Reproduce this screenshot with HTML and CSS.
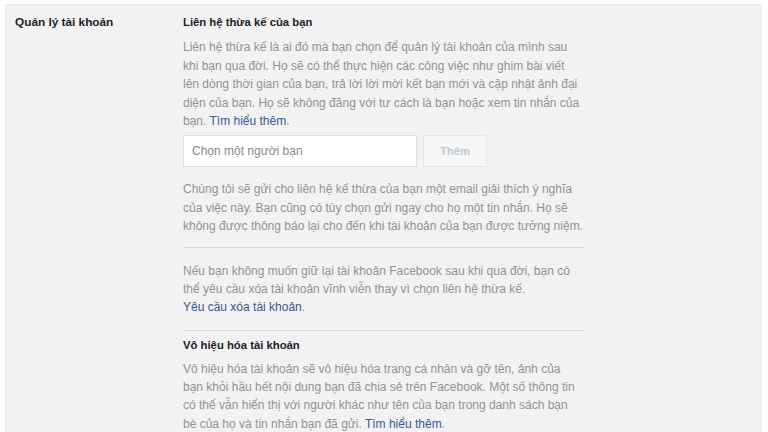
FILE: index.html
```html
<!DOCTYPE html>
<html lang="vi">
<head>
<meta charset="utf-8">
<title>Quản lý tài khoản</title>
<link rel="stylesheet" href="styles.css">
</head>
<body>
<div class="panel">
  <div class="label">Quản lý tài khoản</div>
  <div class="content">
    <h3 class="heading">Liên hệ thừa kế của bạn</h3>
    <p class="text">Liên hệ thừa kế là ai đó mà bạn chọn để quản lý tài khoản của mình sau khi bạn qua đời. Họ sẽ có thể thực hiện các công việc như ghim bài viết lên dòng thời gian của bạn, trả lời lời mời kết bạn mới và cập nhật ảnh đại diện của bạn. Họ sẽ không đăng với tư cách là bạn hoặc xem tin nhắn của bạn. <a class="link" href="#">Tìm hiểu thêm</a>.</p>
    <div class="picker">
      <input class="friend-input" type="text" placeholder="Chọn một người bạn">
      <button class="add-btn" type="button">Thêm</button>
    </div>
    <p class="text note">Chúng tôi sẽ gửi cho liên hệ kế thừa của bạn một email giải thích ý nghĩa của việc này. Bạn cũng có tùy chọn gửi ngay cho họ một tin nhắn. Họ sẽ không được thông báo lại cho đến khi tài khoản của bạn được tưởng niệm.</p>
    <hr class="divider">
    <p class="text delete">Nếu bạn không muốn giữ lại tài khoản Facebook sau khi qua đời, bạn có thể yêu cầu xóa tài khoản vĩnh viễn thay vì chọn liên hệ thừa kế.<br><a class="link" href="#">Yêu cầu xóa tài khoản</a>.</p>
    <hr class="divider second">
    <h3 class="heading second-heading">Vô hiệu hóa tài khoản</h3>
    <p class="text last">Vô hiệu hóa tài khoản sẽ vô hiệu hóa trang cá nhân và gỡ tên, ảnh của bạn khỏi hầu hết nội dung bạn đã chia sẻ trên Facebook. Một số thông tin có thể vẫn hiển thị với người khác như tên của bạn trong danh sách bạn bè của họ và tin nhắn bạn đã gửi. <a class="link" href="#">Tìm hiểu thêm</a>.</p>
  </div>
</div>
</body>
</html>
```
FILE: styles.css
```css
html, body {
  margin: 0;
  padding: 0;
  background: #ffffff;
  height: 100%;
  overflow: hidden;
}
body {
  font-family: "Liberation Sans", Arial, sans-serif;
  font-size: 12px;
  line-height: 18.4px;
  color: #1d2129;
}
.panel {
  margin: 4px 6px 0 5px;
  background: #f2f2f2;
  border: 1px solid #ebebeb;
  border-bottom: none;
  height: 440px;
  display: flex;
  padding-top: 8px;
  box-sizing: border-box;
}
.label {
  width: 168px;
  padding-left: 9px;
  font-size: 11.8px;
  font-weight: bold;
  color: #1d2129;
  flex: none;
}
.content {
  width: 400px;
}
.heading {
  margin: 0 0 7px;
  font-size: 11.3px;
  line-height: 18.4px;
  font-weight: bold;
  color: #1d2129;
}
.text {
  margin: 0;
  color: #8f939a;
}
.link {
  color: #365899;
  text-decoration: none;
}
.picker {
  display: flex;
  gap: 6px;
  margin-top: 5px;
}
.friend-input {
  width: 234px;
  height: 32px;
  box-sizing: border-box;
  border: 1px solid #dddfe2;
  background: #fff;
  padding: 0 8px;
  font-family: inherit;
  font-size: 12px;
  color: #1d2129;
  outline: none;
}
.friend-input::placeholder {
  color: #84898f;
}
.add-btn {
  width: 64px;
  height: 32px;
  box-sizing: border-box;
  border: 1px solid #e4e6e9;
  background: #f5f6f7;
  font-family: inherit;
  font-size: 11.3px;
  font-weight: bold;
  color: #c4c8cd;
  padding: 0;
}
.note {
  margin-top: 13px;
}
.divider {
  border: none;
  border-top: 1px solid #d6d8dc;
  margin: 11px 0 14px;
}
.divider.second {
  margin: 13px 0 5px;
}
.second-heading {
  margin-bottom: 6px;
}
.last {
  line-height: 18.1px;
}
```
